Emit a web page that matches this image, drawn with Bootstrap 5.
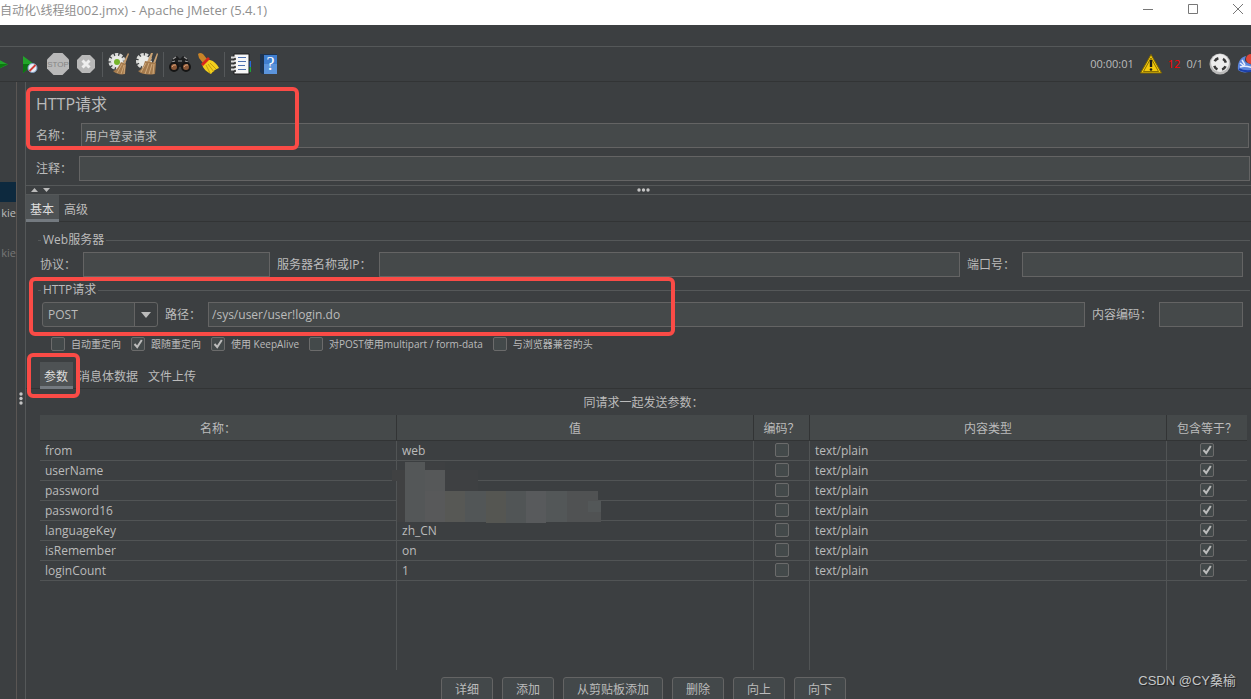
<!DOCTYPE html>
<html lang="zh-CN">
<head>
<meta charset="utf-8">
<meta name="viewport" content="width=device-width, initial-scale=1">
<title>Apache JMeter (5.4.1)</title>
<link href="https://cdn.jsdelivr.net/npm/bootstrap@5.3.0/dist/css/bootstrap.min.css" rel="stylesheet">
<style>
  :root { --panel:#3c3f41; --field:#45494a; --line:#555859; --edge:#646464; --ink:#bbbbbb; --hl:#fa4b46; }
  body { background:var(--panel); color:var(--ink); font:12px/16px "Open Sans","Noto Sans CJK SC",sans-serif; }
  .app { position:relative; }
  .title-bar { background:#fff; color:#8f8f8f; height:25px; }
  .title-bar .program { font-size:13px; }
  .title-bar button, .tool { border:0; background:none; padding:0; }
  .title-bar svg, .tool svg { display:block; }
  .win-controls { gap:35px; padding-right:8px; }
  .menu-strip { height:22px; border-bottom:1px solid var(--line); }
  .tool-bar { height:35px; gap:6px; border-bottom:1px solid #323435; overflow:hidden; }
  .tool { width:22px; height:22px; flex:none; }
  .tool.first { margin-left:-9px; }
  .tool-sep { width:1px; height:25px; background:#55585a; margin:0 -1px; flex:none; }
  .run-info { gap:6px; margin-right:-8px; font-size:11px; }
  .run-info .errors { color:#f00; }
  .tree { width:17px; flex:none; border-right:1px solid #5a5654; padding-top:100px; overflow:hidden; font-size:11px; }
  .tree div { height:20px; line-height:22px; text-align:right; }
  .tree .picked { background:#0d293e; }
  .tree .off { color:#777; margin-top:20px; }
  .v-split { width:9px; flex:none; border-right:1px solid var(--line); display:flex; justify-content:center; padding-top:310px; }
  .field { background:var(--field); border:1px solid var(--edge); border-radius:0; color:var(--ink); height:25px; padding:0 3px; font-size:12px; line-height:16px; min-width:0; }
  .field:focus { background:var(--field); color:var(--ink); box-shadow:none; border-color:#7a8a99; }
  .page-title { font-size:16px; line-height:24px; font-weight:400; margin:0 0 7px; }
  .head-box { padding:10px 1px 4px 10px; }
  .head-box label { width:43px; flex:none; }
  .head-box .name-row label { width:45px; }
  .head-box .name-row { margin-right:1px; }
  .h-split { height:10px; border:1px solid var(--line); border-width:1px 0; padding-right:16px; }
  .tab-strip { border-bottom:1px solid #323435; height:27px; }
  .tab-strip.inner { padding-left:14px; }
  .tab-strip button { border:0; background:none; color:var(--ink); padding:0 5px 0 4px; height:27px; line-height:29px; margin-bottom:-1px; }
  .tab-strip button.active { background:#4e5254; color:#ddd; border-bottom:3px solid #747a80; }
  .tab-strip button + button { margin-left:1px; }
  .group { padding:0 8px 0 14px; }
  .group legend { float:none; width:calc(100% + 9px); margin:0 0 2px -2px; font-size:12px; line-height:20px; display:flex; align-items:center; gap:2px; }
  .group legend::before, .group legend::after { content:""; height:1px; background:var(--line); width:3px; }
  .group legend::after { flex:1; }
  .group-row { height:28px; gap:7px; }
  .group-row label { line-height:25px; white-space:nowrap; }
  .w-protocol { width:187px; flex:none; } .w-port { width:221px; flex:none; } .w-encoding { width:84px; flex:none; }
  .method { width:116px; flex:none; border-radius:3px; padding:0 24px 0 5px; margin-left:2px; appearance:none;
    background:var(--field) url("data:image/svg+xml,%3Csvg xmlns='http://www.w3.org/2000/svg' width='23' height='23'%3E%3Cpath d='M0 0h23v23H0z' fill='%233c3f41'/%3E%3Cpath d='M.5 0v23' stroke='%23646464'/%3E%3Cpath d='M7 9h10l-5 6z' fill='%23bbb'/%3E%3C/svg%3E") right center no-repeat; }
  .tick { appearance:none; width:14px; height:14px; border:1px solid #6b6b6b; border-radius:2px; background:#43494a center no-repeat; margin:0; flex:none; display:block; }
  .tick:checked { background-image:url("data:image/svg+xml,%3Csvg xmlns='http://www.w3.org/2000/svg' width='12' height='12'%3E%3Cpath d='M2.5 6l2.7 3 4.6-7' fill='none' stroke='%23bbb' stroke-width='2'/%3E%3C/svg%3E"); }
  .options { font-size:10px; gap:10px; padding:0 0 0 25px; height:28px; }
  .options label { display:flex; align-items:center; gap:6px; }
  .params-panel { padding:0 4px 0 14px; }
  .params-title { height:26px; line-height:28px; }
  .params { table-layout:fixed; width:100%; margin:0; border-collapse:separate; border-spacing:0; }
  .params th { background:#45494a; font-weight:400; text-align:center; height:26px; padding:2px 0 0; border-bottom:1px solid #323435; border-right:1px solid #323435; }
  .params td { height:20px; padding:1px 5px 0 5px; line-height:18px; border-bottom:1px solid #515455; border-right:1px solid #515455; position:relative; }
  .params tr > :last-child { border-right:0; }
  .params .tick { margin:-2px auto 0; }
  .params .blank td { height:89px; border-bottom:0; }
  .c-encode { width:56px; } .c-equals { width:80px; }
  .mosaic { position:absolute; left:-5px; top:0; z-index:1; }
  .actions { gap:9px; padding-top:7px; }
  .actions button { min-width:52px; height:25px; padding:0 13px; border:1px solid var(--edge); border-radius:3px; background:#43484a; color:var(--ink); font-size:12px; line-height:24px; white-space:nowrap; }
  .marked { position:relative; }
  .outline-box { position:absolute; border:4px solid var(--hl); border-radius:6px; pointer-events:none; z-index:2; }
  .o-name { left:0; top:5px; width:273px; height:63px; }
  .o-path { left:3px; top:-3px; width:646px; height:59px; }
  .o-tab { left:1px; top:-5px; width:53px; height:45px; }
  .credit { position:absolute; right:15px; bottom:8px; font:13px/20px "Liberation Sans","Noto Sans CJK SC",sans-serif; color:#c6c8c9; text-shadow:1px 1px 1px #222; }
</style>
</head>
<body>
<div class="app vh-100 d-flex flex-column overflow-hidden">
  <header class="title-bar d-flex align-items-start justify-content-between flex-shrink-0">
    <span class="pt-1 lh-1 text-nowrap">自动化\线程组<span class="program">002.jmx) - Apache JMeter (5.4.1)</span></span>
    <div class="win-controls d-flex">
      <button type="button" aria-label="最小化"><svg width="10" height="18"><path d="M0 9.500h10" stroke="#777"/></svg></button>
      <button type="button" aria-label="最大化"><svg width="10" height="18"><path d="M.5 4.500h9v9h-9z" fill="none" stroke="#777"/></svg></button>
      <button type="button" aria-label="关闭"><svg width="10" height="18"><path d="M0 4l10 10M10 4L0 14" stroke="#777"/></svg></button>
    </div>
  </header>
  <div class="menu-strip flex-shrink-0"></div>
  <div class="tool-bar d-flex align-items-center flex-shrink-0">
    <button class="tool first" type="button" aria-label="启动"><svg width="22" height="22"><path d="M3 4l14 7.500L3 18z" fill="#22a52a"/><path d="M3 11h14L3 18z" fill="#0c7a10"/></svg></button>
    <button class="tool" type="button" aria-label="不停顿启动"><svg width="22" height="22"><path d="M4 3l11 8-11 9z" fill="#22a52a"/><path d="M4 11l11 0-11 9z" fill="#0c7412"/><circle cx="13.500" cy="15" r="4.500" fill="#e8eef6" stroke="#7c9cc4"/><path d="M10.500 18l6-6" stroke="#d23c36" stroke-width="1.800"/></svg></button>
    <button class="tool" type="button" aria-label="停止"><svg width="22" height="22"><path d="M6.500 0h9L22 6.500v9L15.500 22h-9L0 15.500v-9z" fill="#b9b9b9"/><text x="11" y="14" text-anchor="middle" font-size="8" font-family="Liberation Sans" fill="#858585">STOP</text></svg></button>
    <button class="tool" type="button" aria-label="关闭线程"><svg width="22" height="22"><path d="M7 2h8l5 5v8l-5 5H7l-5-5V7z" fill="#b8b8b8"/><path d="M7.500 7.500l7 7m0-7l-7 7" stroke="#eee" stroke-width="3"/></svg></button>
    <span class="tool-sep"></span>
    <button class="tool" type="button" aria-label="清除"><svg width="22" height="22"><circle cx="9" cy="8.500" r="7" fill="none" stroke="#d9dad8" stroke-width="3" stroke-dasharray="3.200 1.200"/><circle cx="9" cy="8.500" r="6" fill="#e9eae7"/><circle cx="9" cy="9" r="3" fill="#76b52b"/><path d="M20 0l1 1-4 10-2-1z" fill="#c29a6c"/><path d="M13 9l5 2-1 10c-4 1-9 0-12-3 4-1 6-5 8-9z" fill="#a57b4d"/><path d="M14 11l-5 9m7-8l-3 9m4-9l-1 9" stroke="#d5b083" stroke-width=".8"/></svg></button>
    <button class="tool" type="button" aria-label="清除全部"><svg width="22" height="22"><circle cx="8" cy="8" r="6.500" fill="none" stroke="#d9dad8" stroke-width="3" stroke-dasharray="3.200 1.200"/><circle cx="8" cy="8" r="5.500" fill="#e9eae7"/><path d="M15 0h2l-3 10-3-1zM21 0l1 1-3 10-2-1z" fill="#c9a274"/><path d="M9 8l11 2-1 11c-5 1-13 1-17-3 4-1 6-6 7-10z" fill="#a57b4d"/><path d="M10 10l-5 9m8-9l-4 11m7-10l-3 10m5-10l-1 10" stroke="#d5b083" stroke-width=".9"/></svg></button>
    <span class="tool-sep"></span>
    <button class="tool" type="button" aria-label="查找"><svg width="22" height="22"><path d="M4 5l4-2 3 3 3-3 4 2 3 9H1z" fill="#1d1e1f"/><path d="M4 6l3-2M15 4l3 2M9 8h4M3 9l3-1M16 8l3 1" stroke="#999" stroke-width="1.200"/><circle cx="5" cy="14" r="4" fill="#8a5737" stroke="#151515" stroke-width="2"/><circle cx="17" cy="14" r="4" fill="#8a5737" stroke="#151515" stroke-width="2"/><path d="M3 14q1-3 4-2M15 14q1-3 4-2" stroke="#e0a77d" fill="none"/></svg></button>
    <button class="tool" type="button" aria-label="重置查找"><svg width="22" height="22"><path d="M1 1q2-2 5 0l4 5-4 4-4-5z" fill="#c88428"/><path d="M9 7l4 0c4 1 7 4 9 8-3 1-6 3-8 6-4-2-8-5-9-10z" fill="#f2cf1c"/><path d="M11 11l6 8M13 10l6 6M9 12l4 8" stroke="#b88f0a" stroke-width=".8"/><path d="M4 11l7-7 2 2-7 7z" fill="#d8261c"/></svg></button>
    <span class="tool-sep"></span>
    <button class="tool" type="button" aria-label="函数助手"><svg width="22" height="22"><path d="M18 8h3v6h-3z" fill="#2a6ad8"/><path d="M18 14h3v5h-3z" fill="#1da536"/><path d="M4 1h15v20H4z" fill="#f7f7f7" stroke="#1d1d1d"/><path d="M1 4.500h5M1 8.500h5M1 12.500h5M1 16.500h5" stroke="#d9d9d9" stroke-width="2"/><path d="M4 6h2M4 10h2M4 14h2M4 18h2" stroke="#222" stroke-width="1.500"/><path d="M8 4.500h8M8 8.500h8M8 12.500h7M8 16.500h8" stroke="#4c6fae" stroke-width="1.200"/></svg></button>
    <button class="tool" type="button" aria-label="帮助"><svg width="22" height="22"><path d="M2 1h17v20H4l-2-2z" fill="#1e3450"/><path d="M6 2h13v19H6z" fill="#3f7fd0"/><path d="M6 11h13v10H6z" fill="#5b94dc"/><text x="12.500" y="17" text-anchor="middle" font-size="18" font-family="Liberation Serif" fill="#fff">?</text></svg></button>
    <div class="run-info d-flex align-items-center ms-auto">
      <span>00:00:01</span>
      <button class="tool" type="button" aria-label="显示日志"><svg width="22" height="22"><path d="M11 1.500L21.500 20H.5z" fill="#f4c90c" stroke="#7d6500" stroke-linejoin="round"/><path d="M11 5l7.500 13.500h-15z" fill="none" stroke="#5c4b00" stroke-width=".7"/><path d="M11 7v7" stroke="#1a1a1a" stroke-width="2.400"/><circle cx="11" cy="16.500" r="1.300" fill="#1a1a1a"/></svg></button>
      <span class="errors">12</span>
      <span>0/1</span>
      <svg width="22" height="22" class="flex-shrink-0"><circle cx="11" cy="11" r="10.500" fill="#b9b9b9"/><circle cx="11" cy="10" r="9" fill="#ededed"/><circle cx="11" cy="11" r="6" fill="none" stroke="#383838" stroke-width="2.500" stroke-dasharray="4.600 4.825" stroke-dashoffset="-2.400"/></svg>
      <svg width="22" height="22" class="flex-shrink-0"><path d="M1 17C0 9 4 4 9 3c-2 4-1 6 2 7l8 4c-5 6-13 7-18 3z" fill="#5c86dc"/><path d="M3 14q5-2 13 1M3 10l4 3M5 7l3 5" stroke="#e4ecff" fill="none" stroke-width="1.500"/><path d="M2 16q4 3 13 2" stroke="#1c3fa8" stroke-width="2" fill="none"/><circle cx="14" cy="6" r="5" fill="#e0463a"/></svg>
    </div>
  </div>

  <div class="d-flex flex-grow-1 overflow-hidden">
    <nav class="tree"><div class="picked"></div><div>kie</div><div class="off">kie</div></nav>
    <div class="v-split"><svg width="4" height="13" fill="#c4c4c4"><circle cx="2" cy="2" r="1.700"/><circle cx="2" cy="6.500" r="1.700"/><circle cx="2" cy="11" r="1.700"/></svg></div>

    <main class="flex-grow-1">
      <section class="head-box marked">
        <h1 class="page-title">HTTP请求</h1>
        <div class="name-row d-flex align-items-center mb-2">
          <label for="name">名称：</label><input id="name" class="field flex-grow-1" value="用户登录请求">
        </div>
        <div class="d-flex align-items-center">
          <label for="comment">注释：</label><input id="comment" class="field flex-grow-1">
        </div>
        <div class="outline-box o-name"></div>
      </section>
      <div class="h-split d-flex align-items-center">
        <svg width="22" height="8" class="ms-1" fill="#bbb"><path d="M1 6l3.500-4L8 6zM13 2h7l-3.500 4z"/></svg>
        <svg width="14" height="4" class="mx-auto" fill="#c4c4c4"><circle cx="2" cy="2" r="1.700"/><circle cx="6.500" cy="2" r="1.700"/><circle cx="11" cy="2" r="1.700"/></svg>
      </div>
      <div class="tab-strip d-flex" role="tablist">
        <button type="button" role="tab" class="active">基本</button><button type="button" role="tab">高级</button>
      </div>

      <fieldset class="group mt-2">
        <legend>Web服务器</legend>
        <div class="group-row d-flex align-items-start">
          <label for="protocol">协议：</label><input id="protocol" class="field w-protocol">
          <label for="server">服务器名称或IP：</label><input id="server" class="field flex-grow-1">
          <label for="port">端口号：</label><input id="port" class="field w-port">
        </div>
      </fieldset>
      <div class="marked">
        <fieldset class="group">
          <legend>HTTP请求</legend>
          <div class="group-row d-flex align-items-start">
            <select class="field method" aria-label="方法"><option>POST</option><option>GET</option></select>
            <label for="path">路径：</label><input id="path" class="field flex-grow-1" value="/sys/user/user!login.do">
            <label for="encoding">内容编码：</label><input id="encoding" class="field w-encoding">
          </div>
        </fieldset>
        <div class="outline-box o-path"></div>
      </div>
      <div class="options d-flex align-items-center">
        <label><input type="checkbox" class="tick">自动重定向</label>
        <label><input type="checkbox" class="tick" checked>跟随重定向</label>
        <label><input type="checkbox" class="tick" checked>使用 KeepAlive</label>
        <label><input type="checkbox" class="tick">对POST使用multipart / form-data</label>
        <label><input type="checkbox" class="tick">与浏览器兼容的头</label>
      </div>

      <div class="marked pt-1">
        <div class="tab-strip inner d-flex" role="tablist">
          <button type="button" role="tab" class="active">参数</button><button type="button" role="tab">消息体数据</button><button type="button" role="tab">文件上传</button>
        </div>
        <div class="outline-box o-tab"></div>
      </div>

      <div class="params-panel">
        <div class="params-title text-center">同请求一起发送参数：</div>
        <table class="params">
          <colgroup><col><col><col class="c-encode"><col><col class="c-equals"></colgroup>
          <thead><tr><th>名称：</th><th>值</th><th>编码？</th><th>内容类型</th><th>包含等于？</th></tr></thead>
          <tbody>
            <tr><td>from</td><td>web</td><td><input type="checkbox" class="tick" aria-label="编码"></td><td>text/plain</td><td><input type="checkbox" class="tick" aria-label="包含等于" checked></td></tr>
            <tr><td>userName</td><td><svg class="mosaic" width="210" height="62" shape-rendering="crispEdges"><path d="M0 9h13v52H5V20H0z" fill="#404142"/><path d="M33 1h20v8H33zM53 9h33v21H53z" fill="#3e4042"/><path d="M13 1h20v60H13z" fill="#545758"/><path d="M33 9h20v21H33z" fill="#565859"/><path d="M33 30h20v31H33z" fill="#58595a"/><path d="M53 30h20v31H53z" fill="#575855"/><path d="M73 30h21v31H73z" fill="#525657"/><path d="M94 30h20v32H94z" fill="#555652"/><path d="M114 30h20v32h-20z" fill="#515556"/><path d="M134 30h20v32h-20z" fill="#585a5c"/><path d="M154 30h21v31h-21z" fill="#535758"/><path d="M175 30h31v10h3v21h-34z" fill="#505253"/><path d="M196 40h13v11h-13z" fill="#535758"/></svg></td><td><input type="checkbox" class="tick" aria-label="编码"></td><td>text/plain</td><td><input type="checkbox" class="tick" aria-label="包含等于" checked></td></tr>
            <tr><td>password</td><td></td><td><input type="checkbox" class="tick" aria-label="编码"></td><td>text/plain</td><td><input type="checkbox" class="tick" aria-label="包含等于" checked></td></tr>
            <tr><td>password16</td><td></td><td><input type="checkbox" class="tick" aria-label="编码"></td><td>text/plain</td><td><input type="checkbox" class="tick" aria-label="包含等于" checked></td></tr>
            <tr><td>languageKey</td><td>zh_CN</td><td><input type="checkbox" class="tick" aria-label="编码"></td><td>text/plain</td><td><input type="checkbox" class="tick" aria-label="包含等于" checked></td></tr>
            <tr><td>isRemember</td><td>on</td><td><input type="checkbox" class="tick" aria-label="编码"></td><td>text/plain</td><td><input type="checkbox" class="tick" aria-label="包含等于" checked></td></tr>
            <tr><td>loginCount</td><td>1</td><td><input type="checkbox" class="tick" aria-label="编码"></td><td>text/plain</td><td><input type="checkbox" class="tick" aria-label="包含等于" checked></td></tr>
            <tr class="blank"><td></td><td></td><td></td><td></td><td></td></tr>
          </tbody>
        </table>
        <div class="actions d-flex justify-content-center">
          <button type="button">详细</button><button type="button">添加</button><button type="button">从剪贴板添加</button><button type="button">删除</button><button type="button">向上</button><button type="button">向下</button>
        </div>
      </div>
    </main>
  </div>
  <div class="credit">CSDN @CY桑榆</div>
</div>
<script src="https://cdn.jsdelivr.net/npm/bootstrap@5.3.0/dist/js/bootstrap.bundle.min.js"></script>
</body>
</html>
